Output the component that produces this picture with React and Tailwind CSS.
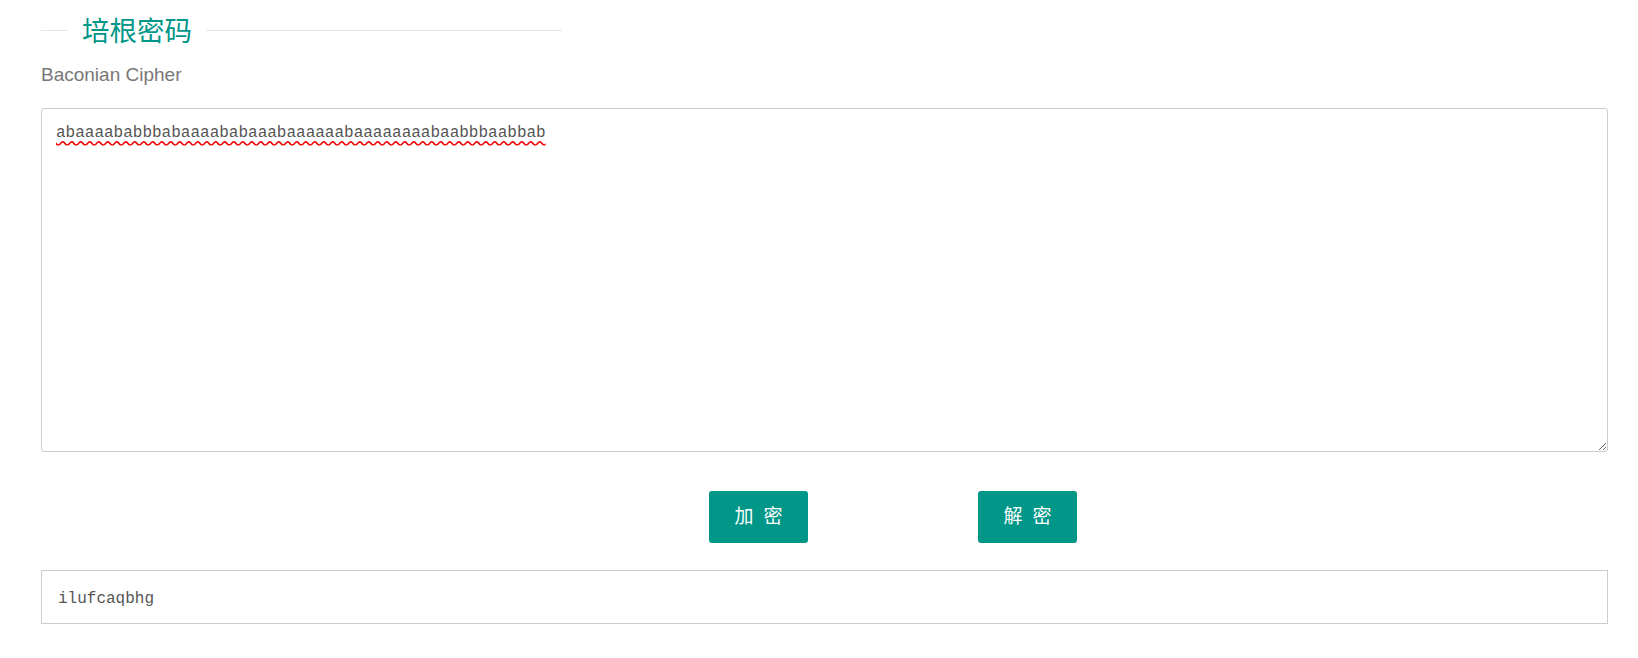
import React, { useState } from "react";

const App = () => {
  const [input, setInput] = useState(
    "abaaaababbbabaaaababaaabaaaaaabaaaaaaaabaabbbaabbab"
  );

  return (
    <div className="min-h-screen w-full bg-white pl-[41px] pr-[30px] font-['Liberation_Sans','Noto_Sans_CJK_SC',sans-serif]">
      {/* TITLE */}
      <div className="mt-[13px] flex h-[34px] w-[521px] items-center">
        <div className="h-px w-[27px] bg-[#e5e5e5]" />
        <h2 className="mx-[14px] font-['Noto_Sans_CJK_SC',sans-serif] text-[27.5px] leading-none text-[#009688]">
          培根密码
        </h2>
        <div className="h-px flex-1 bg-[#e5e5e5]" />
      </div>

      <p className="mt-[14px] text-[19px] leading-[28px] text-[#777]">
        Baconian Cipher
      </p>

      {/* INPUT */}
      <textarea
        value={input}
        onChange={(e) => setInput(e.target.value)}
        className="mt-[19px] block h-[344px] w-full rounded-[3px] border border-[#ccc] px-[14px] pt-[12px] pb-[14px] font-['Liberation_Mono',monospace] text-[16px] leading-[24px] text-[#555] underline decoration-[#e00] decoration-wavy underline-offset-[3px] outline-none"
      />

      {/* BUTTONS */}
      <div className="mt-[39px] flex gap-[170px] pl-[668px]">
        <button className="flex h-[52px] w-[99px] items-center justify-center gap-[10px] rounded-[3px] bg-[#009688] text-[19px] text-white">
          <span>加</span>
          <span>密</span>
        </button>
        <button className="flex h-[52px] w-[99px] items-center justify-center gap-[10px] rounded-[3px] bg-[#009688] text-[19px] text-white">
          <span>解</span>
          <span>密</span>
        </button>
      </div>

      {/* OUTPUT */}
      <div className="mt-[27px] flex h-[54px] items-center border border-[#ccc] px-4 pt-[4px] font-['Liberation_Mono',monospace] text-[16px] text-[#555]">
        ilufcaqbhg
      </div>
    </div>
  );
};

export default App;
